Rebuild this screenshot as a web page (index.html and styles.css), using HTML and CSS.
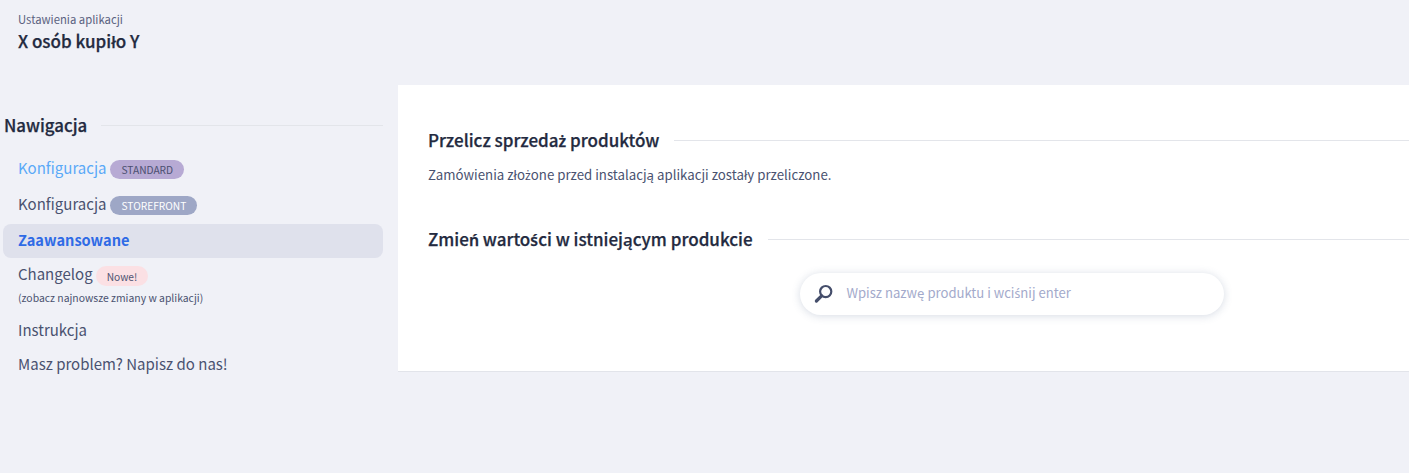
FILE: index.html
```html
<!DOCTYPE html>
<html lang="pl">
<head>
<meta charset="utf-8">
<title>X osób kupiło Y</title>
<link rel="stylesheet" href="styles.css">
</head>
<body>
<header class="top">
  <div class="crumb">Ustawienia aplikacji</div>
  <h1 class="title">X osób kupiło Y</h1>
</header>
<div class="layout">
  <aside class="side">
    <div class="side-head"><h2>Nawigacja</h2><span class="rule"></span></div>
    <nav class="nav">
      <a class="item link"><span>Konfiguracja</span><span class="badge purple">STANDARD</span></a>
      <a class="item"><span>Konfiguracja</span><span class="badge slate">STOREFRONT</span></a>
      <a class="item active"><span>Zaawansowane</span></a>
      <a class="item multi">
        <span class="row"><span>Changelog</span><span class="badge pink">Nowe!</span></span>
        <small>(zobacz najnowsze zmiany w aplikacji)</small>
      </a>
      <a class="item plain"><span>Instrukcja</span></a>
      <a class="item plain"><span>Masz problem? Napisz do nas!</span></a>
    </nav>
  </aside>
  <main class="panel">
    <section class="sec first">
      <div class="sec-head"><h2>Przelicz sprzeda<span class="ac">ż</span> produktów</h2><span class="rule"></span></div>
      <p>Zamówienia zło<span class="ac">ż</span>one przed instalacją aplikacji zostały przeliczone.</p>
    </section>
    <section class="sec">
      <div class="sec-head"><h2>Zmie<span class="ac">ń</span> warto<span class="ac">ś</span>ci w istniejącym produkcie</h2><span class="rule"></span></div>
      <div class="search-wrap">
        <div class="search">
          <svg class="ico" viewBox="0 0 20 20" width="20" height="20" aria-hidden="true">
            <circle cx="11.7" cy="7.6" r="5.6" fill="none" stroke="#454e6b" stroke-width="2.2"/>
            <path d="M7.6 11.8 2.4 17" stroke="#454e6b" stroke-width="3.2" stroke-linecap="round" fill="none"/>
          </svg>
          <span class="ph">Wpisz nazwę produktu i wci<span class="ac">ś</span>nij enter</span>
        </div>
      </div>
    </section>
  </main>
</div>
</body>
</html>
```
FILE: styles.css
```css
* { box-sizing: border-box; }
html, body { margin: 0; padding: 0; }
body {
  background: #f0f1f7;
  height: 473px;
  overflow: hidden;
  font-family: "Noto Sans CJK JP", "Noto Sans", sans-serif;
  color: #4a5270;
}
h1, h2, p { margin: 0; }
.ac { font-family: "Noto Sans", sans-serif; font-size: .93em; line-height: 1; }
h2 .ac { font-weight: 600; }
.top { padding: 11px 18px 0; height: 85px; }
.crumb { font-size: 11.3px; line-height: 16px; color: #5a6180; }
.title { font-size: 17px; line-height: 24px; margin-top: 2px; font-weight: 500; color: #232a40; -webkit-text-stroke: .25px #232a40; }
.layout { display: flex; align-items: flex-start; }
.side { width: 398px; flex: none; padding: 28px 15px 0 3px; }
.side-head { display: flex; align-items: center; gap: 14px; padding-left: 1px; height: 24px; }
.side-head h2 { font-size: 16.85px; line-height: 24px; font-weight: 500; color: #232a40; -webkit-text-stroke: .25px #232a40; }
.rule { flex: 1; height: 1px; background: #e3e5ea; }
.nav { display: flex; flex-direction: column; margin-top: 15px; }
.item { display: flex; align-items: center; gap: 4px; height: 34px; margin-bottom: 2px; padding-left: 15px; font-size: 15px; line-height: 22px; color: #4a5270; border-radius: 8px; }
.item span:first-child { position: relative; top: -1px; }
.item.link { color: #5aa9f8; }
.item.active { background: #dfe1ec; color: #2f6be6; font-weight: 700; font-size: 14.6px; }
.item.multi { display: block; height: 53px; margin: 0; padding-top: 4px; }
.item.plain { margin: 0; }
.item.plain span:first-child { top: 0; }
.row { display: flex; align-items: center; gap: 3px; height: 24px; }
.row span:first-child { top: -1px; }
.item small { display: block; font-size: 10.4px; line-height: 16px; margin-top: 2px; }
.badge { display: inline-flex; align-items: center; height: 19px; padding: 0 11px; border-radius: 10px; font-size: 10.2px; line-height: 19px; font-weight: 400; }
.purple { background: #b7aad4; color: #4b4f70; }
.slate { background: #9ea7c6; color: #fff; }
.pink { background: #fbe0e4; color: #4f5573; height: 20px; margin-top: 2px; }
.panel { flex: 1; height: 287px; background: #fff; border-bottom: 1px solid #e2e4ea; padding: 42px 0 0 30px; }
.sec-head { display: flex; align-items: center; gap: 15px; height: 26px; }
.sec-head h2 { font-size: 17px; line-height: 26px; font-weight: 500; color: #232a40; -webkit-text-stroke: .25px #232a40; }
.sec p { font-size: 13.25px; line-height: 20px; margin-top: 12px; }
.sec.first { height: 99px; }
.search-wrap { display: flex; justify-content: center; margin-top: 21px; padding-left: 186px; }
.search { display: flex; align-items: center; width: 424px; height: 42px; border-radius: 21px; background: #fff; box-shadow: 0 1px 8px rgba(70, 90, 130, .22); padding-left: 14px; }
.ico { flex: none; }
.ph { margin-left: 13px; margin-bottom: 2px; font-size: 13.1px; line-height: 20px; color: #a3aacb; }
```
